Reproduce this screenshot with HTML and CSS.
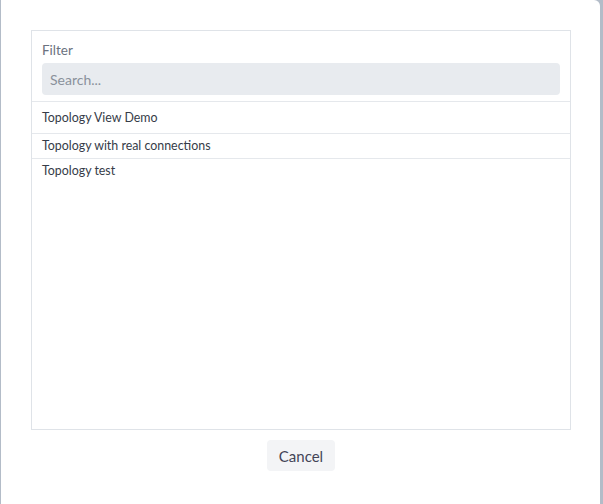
FILE: index.html
```html
<!DOCTYPE html>
<html>
<head>
<meta charset="utf-8">
<link rel="stylesheet" href="styles.css">
</head>
<body>
<div class="modal">
  <div class="panel">
    <div class="filter">
      <div class="label">Filter</div>
      <input class="search" type="text" placeholder="Search...">
    </div>
    <ul class="list">
      <li class="item first">Topology View Demo</li>
      <li class="item">Topology with real connections</li>
      <li class="item last">Topology test</li>
    </ul>
  </div>
  <div class="footer">
    <button class="cancel">Cancel</button>
  </div>
</div>
</body>
</html>
```
FILE: styles.css
```css
html, body {
  margin: 0;
  padding: 0;
  height: 100%;
}
body {
  background: #b3bcc8;
  font-family: Lato, "Open Sans", sans-serif;
  padding: 0 3px 0 1px;
  box-sizing: border-box;
}
.modal {
  background: #fff;
  height: 504px;
  border-top-right-radius: 6px;
  padding: 30px 29px 0 30px;
  box-sizing: border-box;
}
.panel {
  border: 1px solid #dfe3e8;
  height: 400px;
  box-sizing: border-box;
  display: flex;
  flex-direction: column;
}
.filter {
  padding: 11px 10px 6px 10px;
  border-bottom: 1px solid #e5e8ec;
}
.label {
  font-size: 13.5px;
  color: #6b7280;
  line-height: 16px;
  margin-bottom: 5px;
}
.search {
  display: block;
  width: 100%;
  box-sizing: border-box;
  height: 32px;
  border: none;
  border-radius: 4px;
  background: #e8ebef;
  padding: 0 8px;
  font-family: inherit;
  font-size: 14px;
  color: #333;
  outline: none;
}
.search::placeholder {
  color: #8a919b;
}
.list {
  list-style: none;
  margin: 0;
  padding: 0;
}
.item {
  font-size: 12.4px;
  color: #363c48;
  padding: 5px 10px 5px 10px;
  line-height: 14px;
  border-bottom: 1px solid #e5e8ec;
}
.item.first {
  padding-top: 9px;
  padding-bottom: 8px;
}
.item.last {
  border-bottom: none;
}
.footer {
  display: flex;
  justify-content: center;
  padding-top: 10px;
}
.cancel {
  background: #f3f4f6;
  border: none;
  border-radius: 4px;
  width: 68px;
  height: 31px;
  font-family: inherit;
  font-size: 15px;
  color: #434556;
  padding: 0;
}
```
